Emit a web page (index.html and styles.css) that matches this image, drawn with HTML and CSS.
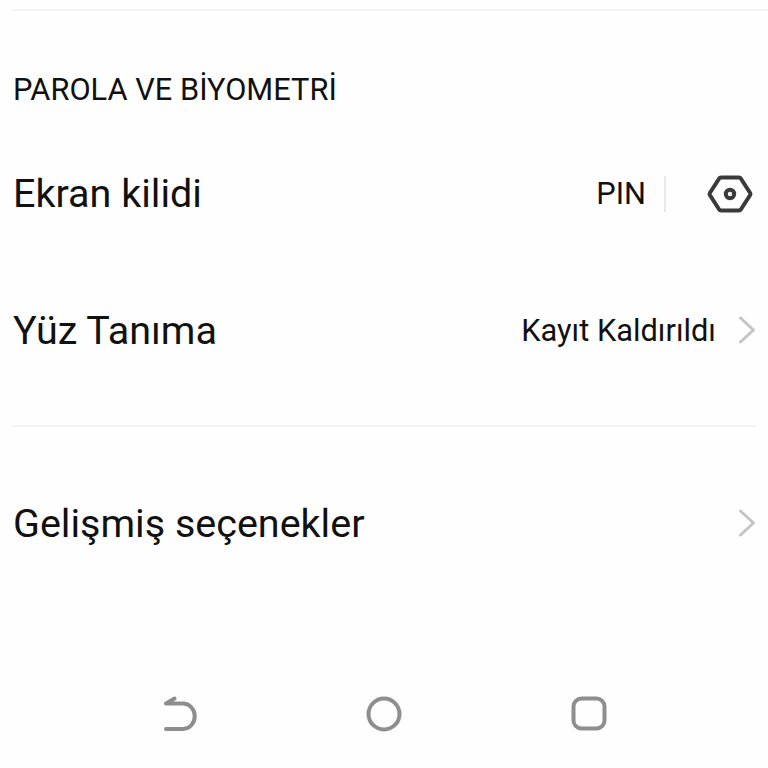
FILE: index.html
```html
<!DOCTYPE html>
<html lang="tr">
<head>
<meta charset="utf-8">
<title>Parola ve biyometri</title>
<link rel="stylesheet" href="styles.css">
</head>
<body>
<main class="screen">
  <div class="settings">
    <hr class="divider divider-top">
    <h2 class="section-title">PAROLA VE BİYOMETRİ</h2>
    <div class="row row-lock">
      <span class="row-label">Ekran kilidi</span>
      <span class="row-value">PIN</span>
      <span class="row-sep"></span>
      <svg class="gear" viewBox="0 0 46 40" width="46" height="40" aria-hidden="true">
        <path d="M14.2 3.5h17.6a2.6 2.6 0 0 1 2.2 1.3l9 13.9a2.6 2.6 0 0 1 0 2.6l-9 13.9a2.6 2.6 0 0 1-2.2 1.3H14.2a2.6 2.6 0 0 1-2.2-1.3L3 21.3a2.6 2.6 0 0 1 0-2.6l9-13.9a2.6 2.6 0 0 1 2.2-1.3z"/>
        <circle cx="23" cy="20" r="4.200"/>
      </svg>
    </div>
    <div class="row row-face">
      <span class="row-label">Yüz Tanıma</span>
      <span class="row-value">Kayıt Kaldırıldı</span>
      <svg class="chevron" viewBox="0 0 18 28" width="18" height="28" aria-hidden="true">
        <path d="M2.5 2l13 12-13 12"/>
      </svg>
    </div>
    <hr class="divider divider-mid">
    <div class="row row-advanced">
      <span class="row-label">Gelişmiş seçenekler</span>
      <svg class="chevron" viewBox="0 0 18 28" width="18" height="28" aria-hidden="true">
        <path d="M2.5 2l13 12-13 12"/>
      </svg>
    </div>
  </div>
  <nav class="nav-bar">
    <svg class="nav-icon" viewBox="0 0 36 36" width="36" height="36" aria-hidden="true">
      <path d="M5 7.500H22a11.750 12.750 0 0 1 0 25.500H5M5 7.500l8.500-5"/>
    </svg>
    <svg class="nav-icon" viewBox="0 0 36 36" width="36" height="36" aria-hidden="true">
      <circle cx="18" cy="18" r="15.500"/>
    </svg>
    <svg class="nav-icon" viewBox="0 0 36 36" width="36" height="36" aria-hidden="true">
      <rect x="2.500" y="2.500" width="31" height="30" rx="8"/>
    </svg>
  </nav>
</main>
</body>
</html>
```
FILE: styles.css
```css
* {
  box-sizing: border-box;
}

html,
body {
  margin: 0;
  padding: 0;
  background: #fefefe;
}

.screen {
  display: flex;
  flex-direction: column;
  justify-content: space-between;
  width: 768px;
  height: 768px;
  overflow: hidden;
  font-family: Roboto, "Noto Sans", sans-serif;
  color: #111;
}

.settings {
  display: flex;
  flex-direction: column;
  padding: 9px 12px 0 13px;
}

.divider {
  width: 100%;
  height: 2px;
  margin: 0;
  border: 0;
  background: #f3f3f3;
}

.divider-top {
  width: calc(100% + 12px);
}

.section-title {
  margin: 61px 0 0;
  font-size: 30.800px;
  font-weight: 400;
  line-height: 36px;
}

.row {
  display: flex;
  align-items: center;
}

.row-lock {
  height: 48px;
  margin-top: 62px;
}

.row-face {
  height: 48px;
  margin-top: 89px;
}

.row-advanced {
  height: 48px;
  margin-top: 73px;
}

.divider-mid {
  margin-top: 70px;
}

.row-label {
  flex: 1;
  font-size: 39.500px;
  line-height: 48px;
}

.row-value {
  font-size: 30.800px;
  line-height: 36px;
}

.row-sep {
  width: 2px;
  height: 36px;
  margin: 0 41px 0 18px;
  background: #e8e8e8;
}

.gear {
  flex: none;
  margin-right: 3px;
}

.gear path,
.gear circle {
  fill: none;
  stroke: #3a3a3a;
  stroke-width: 4;
}

.chevron {
  flex: none;
  margin: 0 0 2px 22px;
}

.chevron path {
  fill: none;
  stroke: #c4c4c4;
  stroke-width: 3;
  stroke-linecap: round;
  stroke-linejoin: round;
}

.nav-bar {
  display: flex;
  justify-content: space-between;
  padding: 0 161px 36px 161px;
}

.nav-icon {
  flex: none;
  fill: none;
  stroke: #8e8e8e;
  stroke-width: 4;
  stroke-linecap: round;
  stroke-linejoin: round;
}
```
